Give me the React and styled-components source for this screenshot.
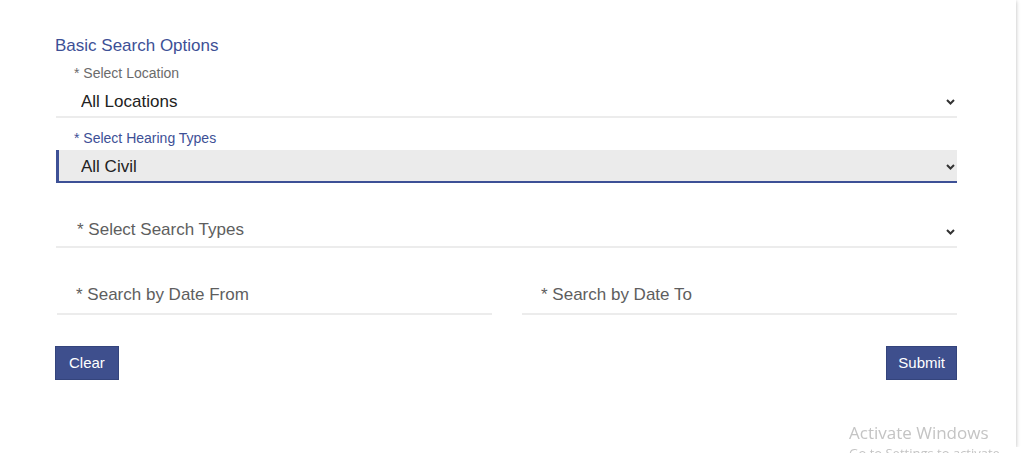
import React from "react";
import styled, { createGlobalStyle } from "styled-components";

const GlobalStyle = createGlobalStyle`
  body {
    margin: 0;
    background: #fff;
    font-family: "Liberation Sans", Arial, sans-serif;
  }
`;

const Card = styled.div`
  width: 1016px;
  height: 447px;
  box-sizing: border-box;
  padding: 36px 59px 0 55px;
  background: #fff;
  box-shadow: 0 1px 4px rgba(0, 0, 0, 0.28);
`;

const Title = styled.h3`
  margin: 0 0 7px;
  font-size: 17px;
  line-height: 20px;
  font-weight: 400;
  color: #3d5096;
`;

const Field = styled.div`
  display: flex;
  flex-direction: column;
  flex: 1;
  margin-bottom: 10px;
`;

const Label = styled.label`
  height: 22px;
  padding-left: 19px;
  font-size: 14px;
  line-height: 20px;
  color: ${(props) => (props.active ? "#3d5096" : "#6b6b6b")};
`;

const SelectBox = styled.div`
  position: relative;
  margin-left: 1px;
  height: 33px;
  box-sizing: border-box;
  background: ${(props) => (props.active ? "#ebebeb" : "transparent")};
  border-left: ${(props) => (props.active ? "3px solid #3d5096" : "none")};
  border-bottom: 2px solid ${(props) => (props.active ? "#3d5096" : "#ececec")};
`;

const Select = styled.select`
  appearance: none;
  width: 100%;
  height: 100%;
  border: none;
  outline: none;
  background: transparent;
  padding: ${(props) => (props.placeholder ? "0 0 3px" : "1px 0 0")}
    ${(props) => props.indent}px;
  font-family: "Liberation Sans", Arial, sans-serif;
  font-size: 17px;
  color: ${(props) => (props.placeholder ? "#5e5e5e" : "#222")};
`;

const Chevron = styled.svg`
  position: absolute;
  right: 2px;
  top: 14px;
  pointer-events: none;
`;

const Row = styled.div`
  display: flex;
  gap: 28px;
`;

const Input = styled.input`
  height: 35px;
  margin-left: 2px;
  box-sizing: border-box;
  border: none;
  border-bottom: 2px solid #ececec;
  outline: none;
  padding: 0 0 4px 19px;
  font-family: "Liberation Sans", Arial, sans-serif;
  font-size: 17px;
  color: #222;
  &::placeholder {
    color: #5e5e5e;
  }
`;

const Actions = styled.div`
  display: flex;
  justify-content: space-between;
  margin-top: 21px;
`;

const Button = styled.button`
  height: 34px;
  padding: 0 ${(props) => props.px || 12}px 1px;
  border: 1px solid #34447c;
  background: #3e4f8d;
  color: #fff;
  font-family: "Liberation Sans", Arial, sans-serif;
  font-size: 15px;
  cursor: pointer;
`;

const Watermark = styled.div`
  position: fixed;
  left: 849px;
  top: 422px;
  font-family: "Open Sans", "Noto Sans", sans-serif;
  color: #c4c4c4;
  font-size: 17px;
  line-height: 22px;
  pointer-events: none;

  & span {
    display: block;
    font-size: 13px;
    line-height: 18px;
  }
`;

const Arrow = () => (
  <Chevron width="9" height="6" viewBox="0 0 9 6">
    <path d="M1 1l3.5 3.5L8 1" fill="none" stroke="#333" strokeWidth="2" />
  </Chevron>
);

const Dropdown = ({ label, value, active, placeholder }) => (
  <Field>
    <Label active={active}>{label}</Label>
    <SelectBox active={active}>
      <Select
        indent={placeholder ? 21 : active ? 22 : 25}
        placeholder={placeholder ? 1 : undefined}
        defaultValue={value}
      >
        <option>{value}</option>
      </Select>
      <Arrow />
    </SelectBox>
  </Field>
);

const App = () => (
  <>
    <GlobalStyle />
    <Card>
      <Title>Basic Search Options</Title>
      <Dropdown label="* Select Location" value="All Locations" />
      <Dropdown label="* Select Hearing Types" value="All Civil" active />
      <Dropdown label="" value="* Select Search Types" placeholder />
      <Row>
        <Field>
          <Label />
          <Input placeholder="* Search by Date From" />
        </Field>
        <Field>
          <Label />
          <Input placeholder="* Search by Date To" />
        </Field>
      </Row>
      <Actions>
        <Button px={13}>Clear</Button>
        <Button px={11}>Submit</Button>
      </Actions>
    </Card>
    <Watermark>
      Activate Windows
      <span>Go to Settings to activate Windows.</span>
    </Watermark>
  </>
);

export default App;
